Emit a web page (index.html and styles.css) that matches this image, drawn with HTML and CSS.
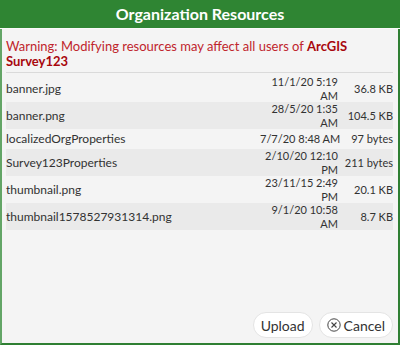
FILE: index.html
```html
<!DOCTYPE html>
<html lang="en">
<head>
  <meta charset="UTF-8">
  <title>Organization Resources</title>
  <link rel="stylesheet" href="styles.css">
</head>
<body>
  <div class="dialog">
    <div class="dialog-header">Organization Resources</div>

    <div class="dialog-body">
      <p class="warning">Warning: Modifying resources may affect all users of <b>ArcGIS</b> <b>Survey123</b></p>

      <table class="resources">
        <tr>
          <td class="name">banner.jpg</td>
          <td class="date">11/1/20 5:19<br>AM</td>
          <td class="size">36.8 KB</td>
        </tr>
        <tr>
          <td class="name">banner.png</td>
          <td class="date">28/5/20 1:35<br>AM</td>
          <td class="size">104.5 KB</td>
        </tr>
        <tr>
          <td class="name">localizedOrgProperties</td>
          <td class="date">7/7/20 8:48 AM</td>
          <td class="size">97 bytes</td>
        </tr>
        <tr>
          <td class="name">Survey123Properties</td>
          <td class="date">2/10/20 12:10<br>PM</td>
          <td class="size">211 bytes</td>
        </tr>
        <tr>
          <td class="name">thumbnail.png</td>
          <td class="date">23/11/15 2:49<br>PM</td>
          <td class="size">20.1 KB</td>
        </tr>
        <tr>
          <td class="name">thumbnail1578527931314.png</td>
          <td class="date">9/1/20 10:58<br>AM</td>
          <td class="size">8.7 KB</td>
        </tr>
      </table>
    </div>

    <div class="dialog-footer">
      <button class="btn">Upload</button>
      <button class="btn">
        <svg class="icon" width="14" height="14" viewBox="0 0 14 14">
          <circle cx="7" cy="7" r="6.2" fill="none" stroke="#444" stroke-width="1"/>
          <path d="M4.5 4.5 L9.5 9.5 M9.5 4.5 L4.5 9.5" stroke="#444" stroke-width="1.1"/>
        </svg>
        Cancel
      </button>
    </div>
  </div>
</body>
</html>
```

FILE: styles.css
```css
/* whole window is the dialog */
body {
  margin: 0;
  font-family: "Lato", "Open Sans", sans-serif;
  color: #323232;
}

.dialog {
  width: 400px;
  height: 345px;
  box-sizing: border-box;
  display: flex;
  flex-direction: column;
  background-color: #f4f4f4;
  border: 2px solid #2f7f33;
  border-top: 0;
  border-left-color: #63a566;
}

.dialog-header {
  height: 28px;
  line-height: 28px;
  background-color: #2f8533;
  color: white;
  text-align: center;
  font-size: 16px;
  font-weight: bold;
  border-bottom: 1px solid #fafafa;
  margin: 0 -2px;
}

.dialog-body {
  flex: 1;
  padding: 0 5px 0 4px;
}

.warning {
  margin: 0;
  padding: 10px 0 3px;
  font-size: 13px;
  line-height: 15px;
  color: #c0252c;
  border-bottom: 1px solid #dadada;
}

.warning b {
  color: #a8070d;
}

/* file list */
.resources {
  width: 100%;
  table-layout: fixed;
  border-collapse: collapse;
  margin-top: 2px;
  font-size: 12px;
  line-height: 14px;
}

.resources tr:nth-child(even) {
  background-color: #eaeaea;
}

.resources td {
  padding: 0;
  vertical-align: middle;
}

.resources .name {
  padding: 3px 0;
}

.resources .date {
  width: 78px;
  font-size: 11px;
  line-height: 13.5px;
  text-align: right;
  white-space: nowrap;
}

.resources .size {
  width: 51px;
  padding-left: 4px;
  font-size: 11px;
  text-align: right;
  white-space: nowrap;
}

.dialog-footer {
  display: flex;
  justify-content: flex-end;
  gap: 6px;
  padding: 0 5px 5px 0;
}

.btn {
  display: flex;
  align-items: center;
  gap: 3px;
  height: 26px;
  padding: 0 7px;
  font-family: "Lato", "Open Sans", sans-serif;
  font-size: 14px;
  color: #333;
  background-color: white;
  border: 1px solid #e4e4e4;
  border-radius: 13px;
  cursor: pointer;
}

.icon {
  display: block;
}
```
